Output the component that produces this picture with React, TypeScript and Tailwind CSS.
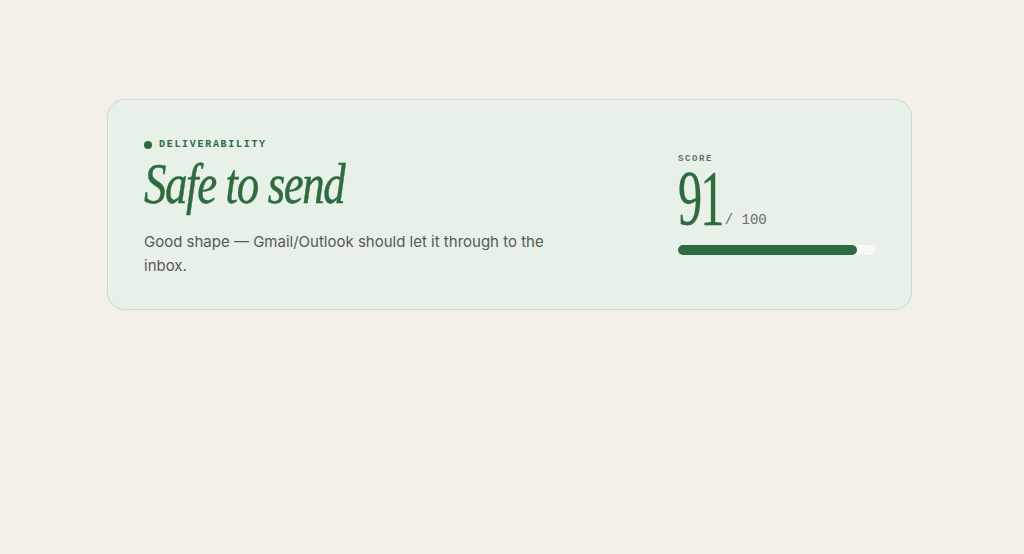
const score = 91;

export default function App() {
  return (
    <div className="min-h-[554px] w-full bg-[#f3efe9] pt-[99px] pl-[107px] pr-[112px]">
      <div className="flex items-center justify-between rounded-[18px] border border-[#c3ddc8] bg-[#e7f1e8] pl-[36px] pr-[36px] pt-[37px] pb-[31px]">
        <div className="flex flex-col">
          <div className="flex items-center gap-[7px]">
            <span className="h-[8px] w-[8px] rounded-full bg-[#2f6b3f]" />
            <span
              className="text-[10px] font-bold leading-[16px] tracking-[0.17em] text-[#2f6b3f]"
              style={{ fontFamily: "'Liberation Mono', monospace" }}
            >
              DELIVERABILITY
            </span>
          </div>
          <h1
            className="mt-[1px] origin-left scale-x-[0.8] text-[56px] italic leading-[60px] tracking-[-0.03em] text-[#2f6b3f] whitespace-nowrap [-webkit-text-stroke:0.5px_#2f6b3f]"
            style={{ fontFamily: "'Liberation Serif', serif" }}
          >
            Safe to send
          </h1>
          <p
            className="mt-[16px] max-w-[420px] text-[15px] leading-[24px] text-[#555a55]"
            style={{ fontFamily: "Inter, 'Noto Sans', sans-serif" }}
          >
            Good shape — Gmail/Outlook should let it through to the inbox.
          </p>
        </div>
        <div className="mb-[8px] flex w-[197px] flex-col">
          <span
            className="text-[9px] font-bold leading-[14px] tracking-[0.18em] text-[#6b6e6a]"
            style={{ fontFamily: "'Liberation Mono', monospace" }}
          >
            SCORE
          </span>
          <div className="flex items-baseline">
            <span
              className="inline-block origin-left scale-x-[0.62] text-[78px] leading-[64px] tracking-[-0.04em] text-[#2f6b3f] -mr-[30px] [-webkit-text-stroke:0.3px_#2f6b3f]"
              style={{ fontFamily: "'Liberation Serif', serif" }}
            >
              {score}
            </span>
            <span
              className="ml-[5px] text-[14px] text-[#6b6e6a]"
              style={{ fontFamily: "'Liberation Mono', monospace" }}
            >
              / 100
            </span>
          </div>
          <div className="mt-[14px] h-[10px] w-full rounded-full bg-[#f6f9f5]">
            <div
              className="h-full rounded-full bg-[#2e6b40]"
              style={{ width: `${score}%` }}
            />
          </div>
        </div>
      </div>
    </div>
  );
}
